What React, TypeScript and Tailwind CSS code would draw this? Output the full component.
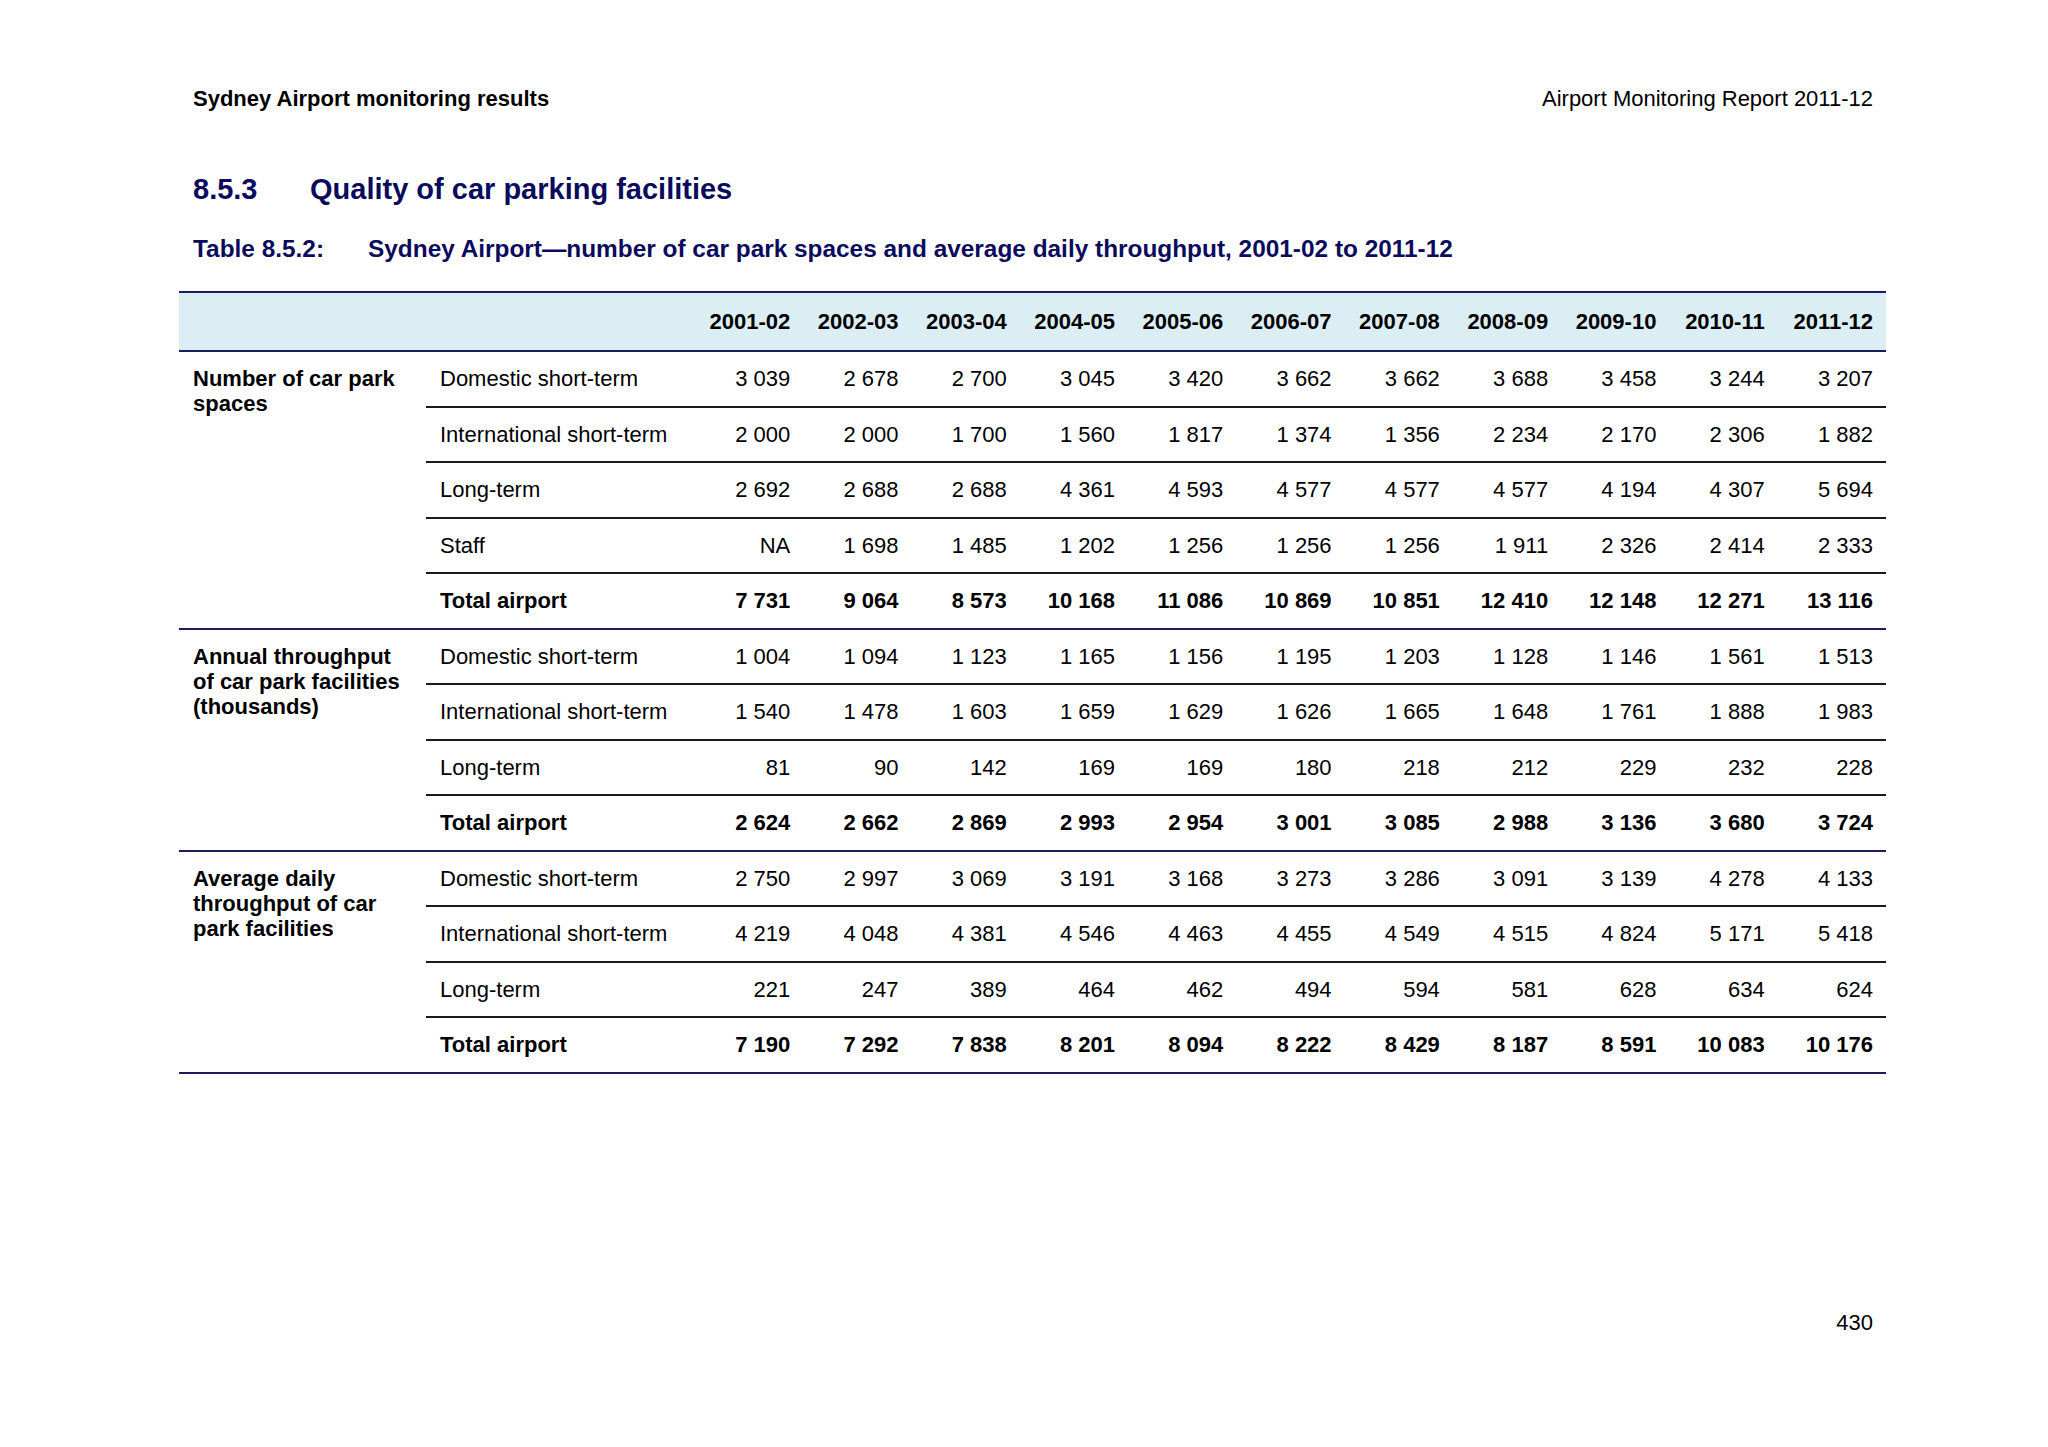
const years = [
  "2001-02",
  "2002-03",
  "2003-04",
  "2004-05",
  "2005-06",
  "2006-07",
  "2007-08",
  "2008-09",
  "2009-10",
  "2010-11",
  "2011-12",
];

type Row = { label: string; values: string[]; total?: boolean };
type Group = { title: string; rows: Row[] };

const groups: Group[] = [
  {
    title: "Number of car park spaces",
    rows: [
      { label: "Domestic short-term", values: ["3 039", "2 678", "2 700", "3 045", "3 420", "3 662", "3 662", "3 688", "3 458", "3 244", "3 207"] },
      { label: "International short-term", values: ["2 000", "2 000", "1 700", "1 560", "1 817", "1 374", "1 356", "2 234", "2 170", "2 306", "1 882"] },
      { label: "Long-term", values: ["2 692", "2 688", "2 688", "4 361", "4 593", "4 577", "4 577", "4 577", "4 194", "4 307", "5 694"] },
      { label: "Staff", values: ["NA", "1 698", "1 485", "1 202", "1 256", "1 256", "1 256", "1 911", "2 326", "2 414", "2 333"] },
      { label: "Total airport", total: true, values: ["7 731", "9 064", "8 573", "10 168", "11 086", "10 869", "10 851", "12 410", "12 148", "12 271", "13 116"] },
    ],
  },
  {
    title: "Annual throughput of car park facilities (thousands)",
    rows: [
      { label: "Domestic short-term", values: ["1 004", "1 094", "1 123", "1 165", "1 156", "1 195", "1 203", "1 128", "1 146", "1 561", "1 513"] },
      { label: "International short-term", values: ["1 540", "1 478", "1 603", "1 659", "1 629", "1 626", "1 665", "1 648", "1 761", "1 888", "1 983"] },
      { label: "Long-term", values: ["81", "90", "142", "169", "169", "180", "218", "212", "229", "232", "228"] },
      { label: "Total airport", total: true, values: ["2 624", "2 662", "2 869", "2 993", "2 954", "3 001", "3 085", "2 988", "3 136", "3 680", "3 724"] },
    ],
  },
  {
    title: "Average daily throughput of car park facilities",
    rows: [
      { label: "Domestic short-term", values: ["2 750", "2 997", "3 069", "3 191", "3 168", "3 273", "3 286", "3 091", "3 139", "4 278", "4 133"] },
      { label: "International short-term", values: ["4 219", "4 048", "4 381", "4 546", "4 463", "4 455", "4 549", "4 515", "4 824", "5 171", "5 418"] },
      { label: "Long-term", values: ["221", "247", "389", "464", "462", "494", "594", "581", "628", "634", "624"] },
      { label: "Total airport", total: true, values: ["7 190", "7 292", "7 838", "8 201", "8 094", "8 222", "8 429", "8 187", "8 591", "10 083", "10 176"] },
    ],
  },
];

export default function App() {
  return (
    <div className="w-[2048px] h-[1447px] bg-white text-black font-['Liberation_Sans',Arial,sans-serif] relative">
      <div className="flex justify-between pl-[193px] pr-[175px] pt-[87px] text-[22px] leading-[24px]">
        <div className="font-bold">Sydney Airport monitoring results</div>
        <div>Airport Monitoring Report 2011-12</div>
      </div>

      <h1 className="flex pl-[193px] mt-[61px] text-[29px] leading-[34px] font-bold text-[#0b0b5e]">
        <span className="w-[117px]">8.5.3</span>
        <span>Quality of car parking facilities</span>
      </h1>

      <h2 className="flex pl-[193px] mt-[29px] text-[24.4px] leading-[28px] font-bold text-[#0b0b5e]">
        <span className="w-[175px]">Table 8.5.2:</span>
        <span>Sydney Airport—number of car park spaces and average daily throughput, 2001-02 to 2011-12</span>
      </h2>

      <table className="ml-[179px] mt-[28px] w-[1707px] table-fixed border-collapse text-[22px] leading-[25px]">
        <colgroup>
          <col className="w-[247px]" />
          <col className="w-[269px]" />
          {years.map((y) => (
            <col key={y} />
          ))}
        </colgroup>
        <thead>
          <tr className="h-[59px] bg-[#daeef3] border-t-2 border-b-2 border-[#1c1c5c]">
            <th />
            <th />
            {years.map((y) => (
              <th key={y} className="text-right font-bold pr-[13px]">
                {y}
              </th>
            ))}
          </tr>
        </thead>
        <tbody>
          {groups.map((g) =>
            g.rows.map((r, i) => {
              const last = i === g.rows.length - 1;
              const line = last
                ? "border-b-2 border-[#1c1c5c]"
                : "border-b-2 border-[#1a1a1a]";
              return (
                <tr key={g.title + r.label} className="h-[55.5px]">
                  {i === 0 && (
                    <td
                      rowSpan={g.rows.length}
                      className="align-top pl-[14px] pr-[14px] pt-[14px] font-bold border-b-2 border-[#1c1c5c]"
                    >
                      {g.title}
                    </td>
                  )}
                  <td className={`pl-[14px] ${line} ${r.total ? "font-bold" : ""}`}>
                    {r.label}
                  </td>
                  {r.values.map((v, k) => (
                    <td
                      key={k}
                      className={`text-right pr-[13px] ${line} ${r.total ? "font-bold" : ""}`}
                    >
                      {v}
                    </td>
                  ))}
                </tr>
              );
            })
          )}
        </tbody>
      </table>

      <div className="absolute right-[175px] top-[1311px] text-[22px] leading-[24px]">430</div>
    </div>
  );
}
